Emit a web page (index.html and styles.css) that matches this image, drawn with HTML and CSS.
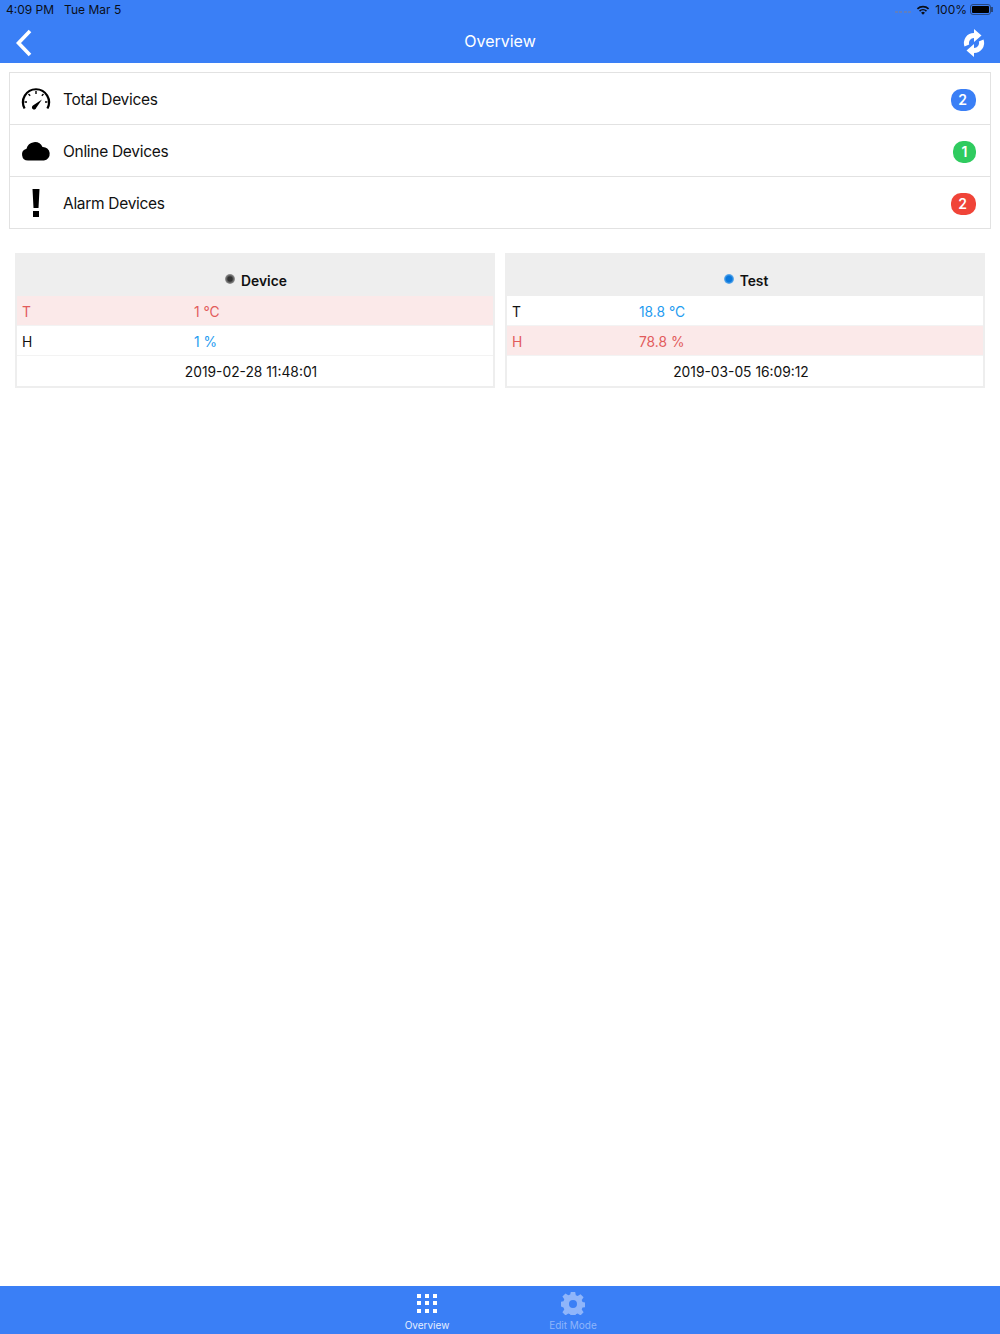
FILE: index.html
```html
<!DOCTYPE html>
<html lang="en">
<head>
    <meta charset="UTF-8">
    <title>Overview</title>
    <link rel="stylesheet" href="styles.css">
</head>
<body>
    <div class="app">
        <!-- top bar -->
        <header class="top-bar">
            <div class="status-bar">
                <div class="status-left">
                    <span>4:09 PM</span>
                    <span>Tue Mar 5</span>
                </div>
                <div class="status-right">
                    <span class="signal"><i></i><i></i><i></i><i></i></span>
                    <svg class="wifi" width="14" height="10" viewBox="0 0 16 12">
                        <path d="M8 11.6 5.7 9.2a3.3 3.3 0 0 1 4.6 0z"/>
                        <path d="M4.5 8 3.2 6.6a6.9 6.9 0 0 1 9.6 0L11.5 8a5 5 0 0 0-7 0z"/>
                        <path d="M2 5.4.6 4a10.7 10.7 0 0 1 14.8 0L14 5.4a8.8 8.8 0 0 0-12 0z"/>
                    </svg>
                    <span>100%</span>
                    <span class="battery"><span class="battery-level"></span></span>
                </div>
            </div>
            <nav class="nav-bar">
                <svg class="back-icon" width="22" height="28" viewBox="0 0 22 28">
                    <path d="M15 2 3.500 14 15 26" fill="none" stroke="#fff" stroke-width="3.600"/>
                </svg>
                <h1>Overview</h1>
                <svg class="refresh-icon" width="22" height="28" viewBox="0 0 22 28">
                    <path d="M11 0 18.500 6.500 11 13V9A5 5 0 0 0 6.200 15.500L1.500 17.500A10 10 0 0 1 11 4z"/>
                    <path d="M11 28 3.500 21.500 11 15V19A5 5 0 0 0 15.800 12.500L20.500 10.500A10 10 0 0 1 11 24z"/>
                </svg>
            </nav>
        </header>

        <main class="content">
            <!-- summary list -->
            <ul class="summary">
                <li class="summary-row">
                    <svg class="summary-icon" width="30" height="22" viewBox="0 0 30 22">
                        <path d="M3.600 20.500A13 13 0 1 1 26.400 20.500" fill="none" stroke="#000" stroke-width="2.200"/>
                        <path d="M15 3v3M7.500 6l1.700 1.700M22.500 6l-1.700 1.700M3.500 14h2.500M24 14h2.500" stroke="#000" stroke-width="1.400"/>
                        <path d="M12.300 17.300 21 11.500 15.300 19.800a2.200 2.200 0 1 1-3-2.500z"/>
                    </svg>
                    <span class="summary-label">Total Devices</span>
                    <span class="badge badge-blue">2</span>
                </li>
                <li class="summary-row">
                    <svg class="summary-icon" width="30" height="20" viewBox="0 0 30 20">
                        <path d="M7 19.500a6 6 0 0 1-1.500-11.800A8.500 8.500 0 0 1 21.500 6 6.800 6.800 0 0 1 23 19.500z"/>
                    </svg>
                    <span class="summary-label">Online Devices</span>
                    <span class="badge badge-green">1</span>
                </li>
                <li class="summary-row">
                    <svg class="summary-icon" width="30" height="28" viewBox="0 0 30 28">
                        <path d="M11.500 0h7l-1 19h-5zM12 22h6v6h-6z"/>
                    </svg>
                    <span class="summary-label">Alarm Devices</span>
                    <span class="badge badge-red">2</span>
                </li>
            </ul>

            <!-- device cards -->
            <div class="cards">
                <section class="card">
                    <div class="card-head">
                        <span class="dot dot-off"></span>
                        <span>Device</span>
                    </div>
                    <div class="card-row alarm"><span class="card-key">T</span><span class="card-val">1 °C</span></div>
                    <div class="card-row"><span class="card-key">H</span><span class="card-val">1 %</span></div>
                    <div class="card-time">2019-02-28 11:48:01</div>
                </section>
                <section class="card card-test">
                    <div class="card-head">
                        <span class="dot dot-on"></span>
                        <span>Test</span>
                    </div>
                    <div class="card-row"><span class="card-key">T</span><span class="card-val">18.8 °C</span></div>
                    <div class="card-row alarm"><span class="card-key">H</span><span class="card-val">78.8 %</span></div>
                    <div class="card-time">2019-03-05 16:09:12</div>
                </section>
            </div>
        </main>

        <!-- tab bar -->
        <footer class="tab-bar">
            <div class="tab">
                <svg width="24" height="24" viewBox="0 0 24 24">
                    <path d="M2 3h4v4H2zM10 3h4v4h-4zM18 3h4v4h-4zM2 10h4v4H2zM10 10h4v4h-4zM18 10h4v4h-4zM2 18h4v4H2zM10 18h4v4h-4zM18 18h4v4h-4z"/>
                </svg>
                <span>Overview</span>
            </div>
            <div class="tab tab-muted">
                <svg width="24" height="24" viewBox="0 -1 24 24">
                    <path fill-rule="evenodd" d="M9.800 0h4.400l.6 3.300 1.900.8 2.800-1.900 3.100 3.100-1.900 2.800.8 1.900 3.300.6v4.400l-3.300.6-.8 1.900 1.900 2.800-3.100 3.100-2.800-1.900-1.900.8-.6 3.300H9.800l-.6-3.300-1.900-.8-2.800 1.900-3.100-3.100 1.900-2.800-.8-1.900L-.8 14.200V9.800l3.300-.6.8-1.900L1.400 4.500l3.100-3.100 2.800 1.900 1.900-.8zM12 8a4 4 0 1 0 0 8 4 4 0 0 0 0-8z"/>
                </svg>
                <span>Edit Mode</span>
            </div>
        </footer>
    </div>
</body>
</html>
```

FILE: styles.css
```css
/* global styles */
* {
    margin: 0;
    padding: 0;
    box-sizing: border-box;
}

body {
    background: #fff;
    font-family: Inter, 'Liberation Sans', sans-serif;
    color: #111;
}

.app {
    height: 1334px;
    display: flex;
    flex-direction: column;
}

/* top bar */
.top-bar {
    height: 63px;
    background: #3a7ff6;
}

.status-bar {
    height: 19px;
    padding: 0 7px 0 6px;
    display: flex;
    justify-content: space-between;
    align-items: center;
    font-size: 12px;
    color: #0b0f18;
}

.status-left {
    display: flex;
    gap: 10px;
}

.status-right {
    display: flex;
    align-items: center;
    gap: 5px;
}

.signal {
    display: flex;
    gap: 1.500px;
    margin-top: 5px;
}

.signal i {
    width: 3px;
    height: 2px;
    background: #5f7fc0;
}

.wifi {
    fill: #0b0f18;
}

.battery {
    position: relative;
    width: 21px;
    height: 11px;
    margin: 0 2px 0 -2px;
    padding: 1px;
    border: 1px solid #27477f;
    border-radius: 3px;
}

/* battery nib */
.battery::after {
    content: "";
    position: absolute;
    top: 2px;
    right: -3px;
    width: 2px;
    height: 5px;
    background: #27477f;
}

.battery-level {
    display: block;
    height: 100%;
    background: #000;
    border-radius: 1px;
}

.nav-bar {
    height: 44px;
    padding: 4px 15px 0;
    display: flex;
    justify-content: space-between;
    align-items: center;
}

.nav-bar h1 {
    font-size: 16px;
    font-weight: 400;
    color: #fff;
    margin-top: -5px;
}

.refresh-icon {
    fill: #fff;
}

/* summary list */
.content {
    flex: 1;
    padding: 9px 9px 0;
}

.summary {
    list-style: none;
    border: 1px solid #e2e2e2;
}

.summary-row {
    height: 52px;
    padding: 0 14px 0 11px;
    display: flex;
    align-items: center;
    border-bottom: 1px solid #e2e2e2;
}

.summary-row:last-child {
    height: 51px;
    border-bottom: none;
}

.summary-icon {
    flex: none;
    margin-right: 12px;
}

.summary-label {
    flex: 1;
    padding-top: 2px;
    font-size: 15.500px;
    letter-spacing: -0.300px;
}

.badge {
    width: 25px;
    height: 22px;
    margin-top: 2px;
    padding-right: 2px;
    border-radius: 10px;
    display: flex;
    justify-content: center;
    align-items: center;
    color: #fff;
    font-size: 14px;
    font-weight: 600;
}

.badge-blue {
    background: #3a7ff6;
}

.badge-green {
    width: 23px;
    padding-right: 0;
    background: #2fcb5f;
}

.badge-red {
    background: #f04438;
}

/* device cards */
.cards {
    margin-top: 24px;
    padding: 0 6px;
    display: grid;
    grid-template-columns: 480px 480px;
    gap: 10px;
}

.card {
    border: 2px solid #eee;
    border-top: none;
    font-size: 13.800px;
}

.card-head {
    height: 43px;
    margin: 0 -2px;
    padding: 12px 0 0 2px;
    background: #eee;
    display: flex;
    justify-content: center;
    align-items: center;
    gap: 6px;
    font-weight: 600;
}

.dot {
    width: 10px;
    height: 10px;
    margin-top: -3px;
    border-radius: 50%;
}

.dot-off {
    background: radial-gradient(circle, #333 30%, #999 70%, transparent 100%);
}

.dot-on {
    background: radial-gradient(circle, #0a78dc 40%, #7fbcf0 75%, transparent 100%);
}

.card-row {
    height: 30px;
    padding: 2px 5px 0;
    display: flex;
    align-items: center;
    border-bottom: 1px solid #f3f3f3;
}

.card-key {
    width: 172px;
}

.card-test .card-key {
    width: 127px;
}

.card-val {
    color: #1e9bf0;
}

.card-row.alarm {
    background: #fbe9e9;
    color: #e25b5b;
}

.card-row.alarm .card-val {
    color: #e25b5b;
}

.card-time {
    height: 30px;
    padding: 1px 8px 0 0;
    display: flex;
    justify-content: center;
    align-items: center;
}

/* tab bar */
.tab-bar {
    height: 48px;
    background: #3a7ff6;
    display: flex;
    justify-content: center;
    gap: 50px;
}

.tab {
    width: 96px;
    padding-top: 5px;
    display: flex;
    flex-direction: column;
    align-items: center;
    gap: 4px;
    color: #e6eeff;
    font-size: 10px;
    fill: #fff;
}

.tab-muted {
    color: #8fb5fa;
    fill: #8fb5fa;
}
```
